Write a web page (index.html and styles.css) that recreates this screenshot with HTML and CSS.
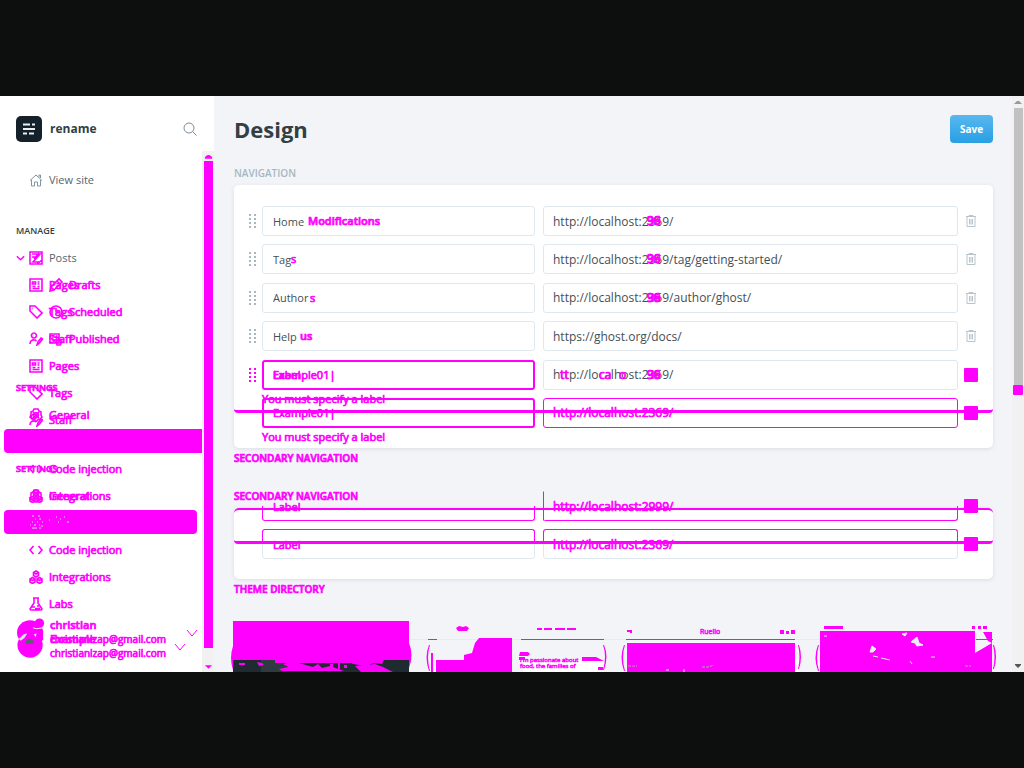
FILE: index.html
```html
<!DOCTYPE html>
<html lang="en">
<head>
<meta charset="utf-8">
<title>Design</title>
<link rel="stylesheet" href="styles.css">
</head>
<body>
<svg class="defs" aria-hidden="true">
  <symbol id="trash" viewBox="0 0 12 14"><path d="M1 2.5h10M4 2.5v-1h4v1M2 2.5v10h8v-10M4.5 5v5.5M6 5v5.5M7.5 5v5.5"/></symbol>
  <symbol id="grip" viewBox="0 0 7 14"><path d="M0 0h2v2H0zM5 0h2v2H5zM0 4h2v2H0zM5 4h2v2H5zM0 8h2v2H0zM5 8h2v2H5zM0 12h2v2H0zM5 12h2v2H5z"/></symbol>
  <symbol id="page" viewBox="0 0 14 14"><path d="M1 1h12v12H1zM3.5 4h3v2h-3zM8.500 4h2M8.500 6h2M3.500 8.500h3M8.500 8.500h2M3.500 10.500h7"/></symbol>
  <symbol id="tag" viewBox="0 0 14 14"><path d="M1 1h5l7 7-5 5-7-7zM3.500 3.500h.5"/></symbol>
  <symbol id="staff" viewBox="0 0 14 14"><path d="M5 1a2.500 2.500 0 1 1-.1 0M1 12c0-3 2-4.500 5-4l1.500 1M8 13l1-3 3-4 1.500 1-3 4z"/></symbol>
  <symbol id="gear" viewBox="0 0 14 14"><path d="M5 1h4l1 2 2 1v3l1 2-2 2-2 .5L8 13H6l-1-1.500L3 11 1 9l1-2V4l2-1zM7 4.500a2.500 2.500 0 1 1-.1 0M4 4l6 6M10 4l-6 6"/></symbol>
  <symbol id="code" viewBox="0 0 14 14"><path d="M4.500 3L1 7l3.500 4M9.500 3L13 7l-3.500 4"/></symbol>
  <symbol id="integrations" viewBox="0 0 14 14"><path d="M7 1l2.500 1.500v3L7 7 4.500 5.500v-3zM3.500 7.500L6 9v3l-2.500 1.500L1 12V9zM10.500 7.500L13 9v3l-2.500 1.500L8 12V9zM4.500 2.500L7 4l2.500-1.500M1 9l2.500 1.500L6 9M8 9l2.500 1.500L13 9"/></symbol>
  <symbol id="labs" viewBox="0 0 14 14"><path d="M4 1h6M5 1v5l-4 6q0 1 1 1h10q1 0 1-1L9 6V1M3 10h3M8 9h2M6 11.500h5"/></symbol>
  <symbol id="down" viewBox="0 0 10 6"><path d="M1 1l4 4 4-4"/></symbol>
</svg>
<div class="app">
  <aside class="sidebar">
    <header class="site">
      <svg class="logo" viewBox="0 0 26 26"><rect width="26" height="26" rx="5" fill="#15212a"/><path d="M7 8.500h7M16 8.500h3M7 13h12M7 17.500h4M13 17.500h5" stroke="#e9eef0" stroke-width="2" fill="none"/></svg>
      <strong>rename</strong>
      <button class="search" aria-label="Search"><svg viewBox="0 0 14 14"><circle cx="6" cy="6" r="5"/><path d="M9.500 9.500L13.500 13.500"/></svg></button>
    </header>
    <div class="side-body">
      <div class="side-content">
        <nav class="nav">
          <a class="item view" href="#"><svg class="icon" viewBox="0 0 14 14"><path d="M1 7.500L7 2l6 5.500M2.500 7v6H5.500V9h3v4h3V7M10 4V2h1.500v3"/></svg><span>View site</span></a>
          <h2 class="group">Manage</h2>
          <a class="item" href="#"><svg class="chev diff" viewBox="0 0 10 6"><use href="#down"/></svg><svg class="icon diff" viewBox="0 0 14 14"><path d="M1 1h12v12H1zM3 3h8L4 11h7M5 8l5-6M3 6h6M8 13l5-4"/></svg><span>Posts</span></a>
          <div class="versions diff">
            <div class="version">
              <a class="item" href="#"><svg class="icon"><use href="#page"/></svg><span>Pages</span></a>
              <a class="item" href="#"><svg class="icon"><use href="#tag"/></svg><span>Tags</span></a>
              <a class="item" href="#"><svg class="icon"><use href="#staff"/></svg><span>Staff</span></a>
              <h2 class="group settings">Settings</h2>
              <a class="item" href="#"><svg class="icon"><use href="#gear"/></svg><span>General</span></a>
              <a class="item active wide" href="#" aria-label="Design"></a>
              <a class="item" href="#"><svg class="icon"><use href="#code"/></svg><span>Code injection</span></a>
              <a class="item" href="#"><svg class="icon"><use href="#integrations"/></svg><span>Integrations</span></a>
            </div>
            <div class="version">
              <a class="item sub" href="#"><svg class="icon" viewBox="0 0 14 14"><path d="M1 13l1-4 8-8 3 3-8 8zM8 3l3 3M2 9l3 3"/></svg><span>Drafts</span></a>
              <a class="item sub" href="#"><svg class="icon" viewBox="0 0 14 14"><circle cx="7" cy="7" r="6"/><path d="M7 3v4h3"/></svg><span>Scheduled</span></a>
              <a class="item sub" href="#"><svg class="icon" viewBox="0 0 14 14"><path d="M1 2h9v9H1zM3 5h5M3 8h4M7 10l3-4 3 4-2 3H8z"/></svg><span>Published</span></a>
              <a class="item" href="#"><svg class="icon"><use href="#page"/></svg><span>Pages</span></a>
              <a class="item" href="#"><svg class="icon"><use href="#tag"/></svg><span>Tags</span></a>
              <a class="item" href="#"><svg class="icon"><use href="#staff"/></svg><span>Staff</span></a>
              <h2 class="group settings">Settings</h2>
              <a class="item" href="#"><svg class="icon"><use href="#gear"/></svg><span>General</span></a>
              <a class="item active" href="#" aria-label="Design"><svg class="specks" viewBox="0 0 42 15"><path d="M3 1h2M9 1h2M6 4h1M10 4h2M3 7h1M8 7h1M13 7h1M1 10h1M5 10h2M10 10h1M12 11h2M3 13h5M10 13h2M20 5h1M27 2h1M31 4h1M35 2h1M38 7h2M29 7h1"/></svg></a>
              <a class="item" href="#"><svg class="icon"><use href="#code"/></svg><span>Code injection</span></a>
              <a class="item" href="#"><svg class="icon"><use href="#integrations"/></svg><span>Integrations</span></a>
              <a class="item" href="#"><svg class="icon"><use href="#labs"/></svg><span>Labs</span></a>
            </div>
          </div>
        </nav>
        <footer class="user diff">
          <svg class="avatar" viewBox="0 0 30 42"><g fill="#f0f"><ellipse cx="14" cy="14" rx="14" ry="13"/><circle cx="14" cy="27.500" r="13.500"/><path d="M14 12h14v10l-3 2H14z"/><circle cx="24" cy="4" r="5"/></g><path d="M2 21l5-5 4-1-3 5-4 3zM18 16l3-1-1 4z" fill="#dce4ef"/><path d="M9 26q0-6 6-5 3 1 3 5z" fill="#54666d"/><path d="M17 9l4 1 7-1" stroke="#fff" fill="none"/></svg>
          <div class="account">
            <strong>christian</strong>
            <div class="overlap"><strong>Example</strong><span>christianlzap@gmail.com</span></div>
            <span>christianlzap@gmail.com</span>
          </div>
          <svg class="chevrons" viewBox="0 0 24 22"><path d="M13 1l5 6 5-6M1 15l5 6 5-6"/></svg>
        </footer>
      </div>
      <div class="side-scroll"><svg viewBox="0 0 10 10"><path d="M1 8V6l3-2h2l3 2v2z"/></svg><i></i><svg viewBox="0 0 10 10"><path d="M1 3h8L5 7z"/></svg></div>
    </div>
  </aside>
  <main class="main">
    <header class="head"><h1>Design</h1><button class="save">Save</button></header>
    <h2 class="label">Navigation</h2>
    <section class="panel primary">
      <div class="row"><svg class="grip"><use href="#grip"/></svg><div class="field"><input aria-label="Label" value="Home"><span class="mark home">Modifications</span></div><div class="field url"><input aria-label="URL" value="http://localhost:2369/"><span class="mark port">36</span><span class="mark port">99</span></div><button class="trash" aria-label="Delete"><svg><use href="#trash"/></svg></button></div>
      <div class="row"><svg class="grip"><use href="#grip"/></svg><div class="field"><input aria-label="Label" value="Tag"><span class="mark tags">s</span></div><div class="field url"><input aria-label="URL" value="http://localhost:2369/tag/getting-started/"><span class="mark port">36</span><span class="mark port">99</span></div><button class="trash" aria-label="Delete"><svg><use href="#trash"/></svg></button></div>
      <div class="row"><svg class="grip"><use href="#grip"/></svg><div class="field"><input aria-label="Label" value="Author"><span class="mark authors">s</span></div><div class="field url"><input aria-label="URL" value="http://localhost:2369/author/ghost/"><span class="mark port">36</span><span class="mark port">99</span></div><button class="trash" aria-label="Delete"><svg><use href="#trash"/></svg></button></div>
      <div class="row"><svg class="grip"><use href="#grip"/></svg><div class="field"><input aria-label="Label" value="Help"><span class="mark help">us</span></div><div class="field url"><input aria-label="URL" value="https://ghost.org/docs/"></div><button class="trash" aria-label="Delete"><svg><use href="#trash"/></svg></button></div>
      <div class="row changed"><svg class="grip"><use href="#grip"/></svg><div class="field"><input class="error" aria-label="Label" value="Example01|"><span class="mark start">Label</span><p class="message">You must specify a label</p></div><div class="field url"><input aria-label="URL" value="http://localhost:2369/"><span class="mark tt">tt</span><span class="mark ca">ca</span><span class="mark o">o</span><span class="mark port">36</span><span class="mark port">99</span></div><button class="trash" aria-label="Delete"></button></div>
      <div class="row changed"><span></span><div class="field"><input class="error" aria-label="Label" value="Example01|"><p class="message">You must specify a label</p></div><div class="field url"><input class="diff-input" aria-label="URL" value="http://localhost:2369/"></div><button class="trash" aria-label="Delete"></button></div>
      <i class="edge"></i>
    </section>
    <h2 class="label shifted">Secondary navigation</h2>
    <h2 class="label shifted second">Secondary navigation</h2>
    <section class="panel secondary">
      <div class="row changed cut"><span></span><div class="field"><input aria-label="Label" placeholder="Label"></div><div class="field url"><input aria-label="URL" value="http://localhost:2999/"></div><button class="trash" aria-label="Delete"></button></div>
      <div class="row changed half"><span></span><div class="field"><input aria-label="Label" placeholder="Label"></div><div class="field url"><input aria-label="URL" value="http://localhost:2369/"></div><button class="trash" aria-label="Delete"></button></div>
      <i class="edge"></i>
    </section>
    <h2 class="label shifted theme">Theme directory</h2>
    <svg class="themes" viewBox="0 0 766 51" role="img" aria-label="Theme previews">
      <path d="M180 18.500h583" stroke="#e5edf2"/>
      <path d="M3 39h176v12H3z" fill="#202b31"/>
      <path d="M31 39h25v12H31z" fill="#303b40"/>
      <path d="M408 39h162v12H408zM293 39h81v12h-81z" fill="#fff"/>
      <g fill="#f0f">
        <path d="M3 0h176v39H3zM3 25q-4 12 0 24zM179 22q5 12 0 25zM9 42h6v2H9zM27 41l5 1 2 2-5 1zM45 39h84v3H45zM53 43l12-2 18 5 5-3 4 4 8-2 14 5H52l-3-2 9-2zM116 39h38l-2 4-8-1-9 3-12-2zM125 45l20-2 8 3 10 5h-32zM100 43h3v5h-3zM108 41h2v7h-2zM114 44h3v3h-3zM138 47h17v4h-17z"/>
        <path d="M198 18h9v1h-9zM291 18h83v1h-83zM199 24q-5 12 0 26l1 0q-4-14 0-26zM201 32h2v19h-2zM374 24q5 11 0 25l-1 0q4-14 0-25zM206 39h28v-5l8-2 3-10 4-5h33v34h-76zM289 36h6v3h-6zM352 36h14l8 4h-22zM226 7l3-2 4 1 3-1 3 2-2 3h-9zM307 7h5v2h-5zM314 7h8v2h-8zM325 7h10v2h-10zM337 7h9v2h-9zM290 31h8l2 2-2 2h-9zM368 46h5v3h-5z"/>
        <path d="M397 9h5v3h-2v-1h-3zM550 9h4v4h-4zM556 10h3v3h-3zM561 9h4v4h-4zM396 18h169v1H396zM397 22h168v29H397zM394 24q-5 12 0 26l1 0q-4-14 0-26zM569 24q4 12 0 24l-1 0q3-12 0-24z"/>
        <path d="M594 5h19v3h-19zM742 5h3v3h-3zM748 5h3v3h-3zM753 5h4v3h-4zM590 10h155v22l17-10v29H590zM746 18h17v1h-17zM753 11h9v11l-4-2zM588 24q-5 12 0 26l1 0q-4-14 0-26zM764 24q4 11 0 24l-1 0q3-12 0-24z"/>
      </g>
      <path d="M640 31l2-6 4 3-3 3zM672 13l5-1-2 3zM681 21l6-5 2 6 4 2-6 1-2-3zM643 35l5 1M651 37l9 2M701 36h4M594 15h3M680 40l2 3M454 48v3M436 49h3" fill="#e8edf2" stroke="#e8edf2"/>
      <path d="M398 45h9M472 46h6l6-2M735 45h6" stroke="#aaa" stroke-dasharray="3 1" fill="none"/>
      <g class="preview-text"><text x="290" y="41">I'm passionate about</text><text x="290" y="47">food, the families of</text></g>
      <text class="preview-title" x="470" y="13">Ruello</text>
    </svg>
  </main>
  <div class="page-scroll"><svg viewBox="0 0 12 12"><path d="M2 8l3-3h2l3 3z"/></svg><i class="thumb"></i><i class="thumb-diff"></i><svg class="bottom" viewBox="0 0 12 12"><path d="M3 4h6v1L6 8 3 5z"/></svg></div>
</div>
</body>
</html>
```
FILE: styles.css
```css
* { box-sizing: border-box; }
body {
  margin: 0;
  height: 100vh;
  padding: 96px 0;
  overflow: hidden;
  background: #0d0e0e;
  color: #54666d;
  font: 11px/16px "Open Sans", "Noto Sans", sans-serif;
}
.defs { position: absolute; width: 0; height: 0; }
h1, h2, p { margin: 0; }
button { border: 0; padding: 0; background: none; font: inherit; }
a { color: inherit; text-decoration: none; }
svg { display: block; overflow: visible; }
i { display: block; }

.app { display: flex; height: 100%; overflow: hidden; background: #f3f4f8; }
.sidebar { flex: 0 0 214px; display: flex; flex-direction: column; background: #fff; min-height: 0; }
.site { flex: none; height: 55px; padding: 10px 17px 0 16px; display: flex; align-items: center; gap: 8px; color: #343f44; }
.site strong { font-size: 12px; }
.logo { width: 26px; height: 26px; }
.search { margin-left: auto; }
.search svg { width: 14px; height: 14px; fill: none; stroke: #7c8b9a; }

.side-body { flex: 1; display: flex; min-height: 0; }
.side-content { flex: 1; min-width: 0; display: flex; flex-direction: column; }
.nav { flex: 1; min-height: 0; padding-top: 15px; }
.item {
  display: grid;
  grid-template-columns: 13px 20px 1fr;
  align-items: center;
  height: 27px;
  padding-left: 16px;
}
.icon { grid-column: 2; width: 14px; height: 14px; fill: none; stroke: #7c96a3; }
.item span { grid-column: 3; }
.chev { grid-row: 1; width: 9px; height: 6px; }
.item .icon, .item span { grid-row: 1; }
.group { height: 27px; padding-left: 16px; font-size: 9px; line-height: 28px; font-weight: 600; text-transform: uppercase; color: #343f44; margin-top: 24px; }
.diff { color: #f0f; -webkit-text-stroke: 0.7px #f0f; stroke: #f0f; fill: none; }
.diff .icon, .icon.diff { stroke: #f0f; stroke-width: 1.6; }
.chev.diff { stroke-width: 1.6; }
.versions { display: grid; }
.version { grid-area: 1 / 1; }
.versions .group { color: #f0f; margin-top: 22px; }
.sub { padding-left: 36px; }
.active { height: 24px; margin: 1px 5px 2px 4px; background: #f0f; border-radius: 4px; padding-left: 25px; }
.wide { margin-right: 0; border-radius: 4px 0 0 4px; }
.specks { grid-column: 1 / 4; width: 42px; height: 15px; stroke: #d5e3da; }
.user { flex: none; height: 55px; padding: 1px 4px 0 17px; display: flex; gap: 5px; }
.avatar { flex: none; width: 28px; height: 42px; stroke: none; }
.account { flex: 1; font-size: 10px; line-height: 14px; white-space: nowrap; }
.account > * { display: block; }
.account strong { font-size: 11px; font-weight: 600; }
.overlap { display: grid; }
.account .overlap { display: grid; }
.overlap > * { grid-area: 1 / 1; }
.chevrons { flex: none; width: 24px; height: 22px; margin-top: 11px; margin-left: -6px; }
.side-scroll { flex: 0 0 12px; display: flex; flex-direction: column; align-items: center; background: #f1f1f1; }
.side-scroll svg { width: 9px; height: 10px; fill: #f0f; }
.side-scroll i { flex: 1; width: 9px; background: #f0f; margin-bottom: 14px; }

.main { flex: 1; min-width: 0; padding: 19px 19px 0 20px; }
.head { display: flex; justify-content: space-between; align-items: center; height: 28px; }
h1 { font-size: 22px; line-height: 28px; color: #343f44; }
.save { width: 43px; height: 28px; border-radius: 4px; color: #fff; font-size: 10px; font-weight: 700; background: linear-gradient(#58b8ef, #289fe3); }
.label { font-size: 10px; line-height: 20px; font-weight: 600; text-transform: uppercase; color: #a5b8c1; margin: 20px 0 2px; }
.panel { position: relative; background: #fff; border-radius: 5px; padding: 21px 9px 20px 15px; box-shadow: 0 1px 4px rgba(40, 60, 80, 0.12); display: flex; flex-direction: column; justify-content: space-between; }
.primary { min-height: 263px; }
.row { display: grid; grid-template-columns: 13px minmax(0, 273fr) minmax(0, 423fr) 26px; align-items: center; height: 30px; }
.grip { width: 7px; height: 14px; fill: #a9b8bf; }
.changed .grip { fill: #f0f; }
.field { position: relative; }
.url { padding-left: 8px; }
input { display: block; width: 100%; height: 30px; padding: 0 10px; border: 1px solid #dfe8ee; border-radius: 3px; background: #fff; color: #454f55; font: 11px/16px "Open Sans", "Noto Sans", sans-serif; }
.url, .url input { font-size: 12px; }
.url input { padding-left: 9px; }
.trash { justify-self: center; width: 14px; height: 14px; }
.trash svg { width: 12px; height: 14px; margin: 0 auto; fill: none; stroke: #b8c4ca; }
.changed .trash { background: #f0f; border-radius: 1px; }
.mark, .message, .shifted { color: #f0f; -webkit-text-stroke: 0.7px #f0f; }
.mark { position: absolute; top: 7px; line-height: 16px; }
.home { left: 46px; font-weight: 600; }
.tags { left: 29px; }
.authors { left: 48px; }
.help { left: 38px; font-weight: 600; }
.start { left: 11px; }
.port { left: 112px; }
.tt { left: 25px; }
.ca { left: 64px; }
.o { left: 84px; }
.message { position: absolute; top: 31px; left: 0; white-space: nowrap; z-index: 1; line-height: 16px; }
.error { border: 2px solid #f0f; color: #f0f; padding: 0 9px; -webkit-text-stroke: 0.7px #f0f; }
.diff-input { border-color: #f0f; }
.diff-input, .cut input, .half input { color: #f0f; -webkit-text-stroke: 0.7px #f0f; }
input::placeholder { color: #f0f; opacity: 1; }
.cut { margin-top: -19px; }
.cut input { background: transparent; border-color: transparent; }
.cut .field::after, .half .field::after { content: ""; position: absolute; right: 0; left: 0; height: 14px; border: 1px solid #f0f; pointer-events: none; }
.cut .url::after, .half .url::after { left: 8px; }
.cut .field::after { bottom: 0; border-top: 0; border-radius: 0 0 3px 3px; }
.cut .url::after { border-left: 0; }
.cut .url input { border-left-color: #f0f; border-radius: 0; }
.half .field::after { top: 0; border-bottom: 0; border-radius: 3px 3px 0 0; }
.edge { position: absolute; left: 0; right: 0; bottom: 35px; height: 8px; border-bottom: 3px solid #f0f; border-radius: 5px; pointer-events: none; }
.shifted { margin: 0; }
.second { margin: 18px 0 2px; }
.secondary { min-height: 71px; padding-top: 0; border-top: 2px solid #f0f; }
.themes { width: calc(100% + 7px); margin-left: -4px; margin-top: 22px; }
.themes text { fill: #f0f; stroke: #f0f; stroke-width: 0.5px; }
.preview-text text { font-size: 6px; }
.preview-title { font-size: 7px; }

.page-scroll { flex: 0 0 12px; display: flex; flex-direction: column; align-items: center; background: #f1f1f1; }
.page-scroll svg { width: 12px; height: 12px; fill: #999; }
.page-scroll .thumb { width: 9px; flex: 277; background: #c1c1c1; }
.page-scroll .thumb-diff { width: 10px; flex: 0 0 10px; background: #f0f; border-radius: 1px; }
.page-scroll::after { content: ""; flex: 265; order: 1; }
.page-scroll .bottom { order: 2; fill: #555; }
```
